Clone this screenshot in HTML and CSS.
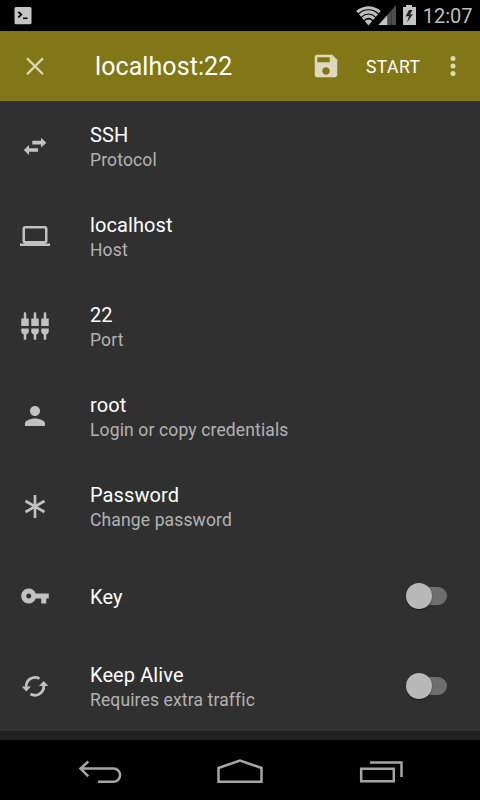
FILE: index.html
```html
<!DOCTYPE html>
<html lang="en">
<head>
<meta charset="utf-8">
<title>localhost:22</title>
<link rel="stylesheet" href="styles.css">
</head>
<body>
<div class="status">
  <svg class="term" width="18" height="18" viewBox="0 0 18 18"><rect x=".5" y="0" width="17" height="17.3" rx="1.5" fill="#c4c4c4"/><path d="M4.300 4.800 7.300 7.600 4.300 10.400" fill="none" stroke="#000" stroke-width="1.8"/><path d="M9 11.300h4.500" stroke="#000" stroke-width="1.6"/></svg>
  <svg class="signals" width="60" height="24" viewBox="355 4 60 24">
    <clipPath id="fan"><path d="M355 10.800Q367.500 1.500 380 10.800L367.500 25.500z"/></clipPath>
    <g clip-path="url(#fan)" fill="none" stroke="#bdbdbd" stroke-width="3.300">
      <circle cx="367.500" cy="23.500" r="16"/><circle cx="367.500" cy="23.500" r="11.600"/><circle cx="367.500" cy="23.500" r="7.300"/><circle cx="367.500" cy="23.500" r="2" stroke-width="4.200"/>
    </g>
    <path d="M395 5v20h-17.500z" fill="#4d4d4d"/><path d="M386.200 15.200V25h-8.700z" fill="#c4c4c4"/><path d="M390.500 10v15" stroke="#3a3a3a"/>
    <path d="M405 5h6v2h4v18h-13V7h3z" fill="#c4c4c4"/><path d="M408 10 404.500 16.500 408 16 406 22.500 412 14 408.800 14.500 411.500 10z" fill="#222"/>
  </svg>
  <span class="clock">12:07</span>
</div>
<header class="appbar">
  <svg class="close" width="30" height="30" viewBox="0 0 30 30"><path d="M7 7.300 23 23.300M23 7.300 7 23.300"/></svg>
  <h1>localhost:22</h1>
  <svg class="save" width="30" height="30" viewBox="0 0 24 24"><path d="M17 3H5a2 2 0 0 0-2 2v14a2 2 0 0 0 2 2h14c1.100 0 2-.9 2-2V7l-4-4zm-5 16c-1.660 0-3-1.340-3-3s1.340-3 3-3 3 1.340 3 3-1.340 3-3 3zm3-10H5V5h10v4z"/></svg>
  <button class="start">START</button>
  <svg class="more" width="30" height="30" viewBox="0 0 24 24"><circle cx="12" cy="6" r="2"/><circle cx="12" cy="12" r="2"/><circle cx="12" cy="18" r="2"/></svg>
</header>
<main>
  <div class="row">
    <svg class="icon" viewBox="0 0 30 30"><path d="M12.300 9.800H21V6.800l5.400 4.900L21 16.600v-3.200h-8.700zM18 17.200H9v-3.200l-5.200 5L9 24v-3.200h9z"/></svg>
    <div class="text"><div class="name">SSH</div><div class="sub">Protocol</div></div>
  </div>
  <div class="row">
    <svg class="icon" viewBox="0 0 24 24"><path d="M20 18c1.100 0 1.990-.9 1.990-2L22 6c0-1.100-.9-2-2-2H4c-1.100 0-2 .9-2 2v10c0 1.100.9 2 2 2H0v2h24v-2h-4zM4 6h16v10H4V6z"/></svg>
    <div class="text"><div class="name">localhost</div><div class="sub">Host</div></div>
  </div>
  <div class="row">
    <svg class="icon" viewBox="0 0 24 24"><path d="M5 2c0-.55-.45-1-1-1s-1 .45-1 1v4H1v6h6V6H5V2zm4 14c0 1.300.84 2.400 2 2.820V23h2v-4.180c1.160-.41 2-1.510 2-2.820v-2H9v2zm-8 0c0 1.300.84 2.400 2 2.820V23h2v-4.180C6.160 18.400 7 17.300 7 16v-2H1v2zM21 6V2c0-.55-.45-1-1-1s-1 .45-1 1v4h-2v6h6V6h-2zm-8-4c0-.55-.45-1-1-1s-1 .45-1 1v4H9v6h6V6h-2V2zm4 14c0 1.300.84 2.400 2 2.820V23h2v-4.180c1.160-.41 2-1.510 2-2.820v-2h-6v2z"/></svg>
    <div class="text"><div class="name">22</div><div class="sub">Port</div></div>
  </div>
  <div class="row">
    <svg class="icon" viewBox="0 0 24 24"><path d="M12 12c2.210 0 4-1.790 4-4s-1.790-4-4-4-4 1.790-4 4 1.790 4 4 4zm0 2c-2.670 0-8 1.340-8 4v2h16v-2c0-2.660-5.330-4-8-4z"/></svg>
    <div class="text"><div class="name">root</div><div class="sub">Login or copy credentials</div></div>
  </div>
  <div class="row">
    <svg class="icon" viewBox="0 0 30 30"><path class="line" d="M15 4v23M5.500 10l19 11M24.500 10l-19 11"/></svg>
    <div class="text"><div class="name">Password</div><div class="sub">Change password</div></div>
  </div>
  <div class="row">
    <svg class="icon" viewBox="0 0 24 24"><path d="M12.650 10C11.830 7.670 9.610 6 7 6c-3.310 0-6 2.690-6 6s2.690 6 6 6c2.610 0 4.830-1.670 5.650-4H17v4h4v-4h2v-4H12.650zM7 14c-1.100 0-2-.9-2-2s.9-2 2-2 2 .9 2 2-.9 2-2 2z"/></svg>
    <div class="text"><div class="name">Key</div></div>
    <div class="switch"></div>
  </div>
  <div class="row">
    <svg class="icon" viewBox="0 0 30 30"><path class="arc" d="M19.500 7.600A8.900 8.900 0 0 0 6.200 15.800M10.500 23A8.900 8.900 0 0 0 23.800 14.800"/><path d="M1.700 15.500h9.300L6.300 20.600zM19 15.100h9.300L23.700 10z"/></svg>
    <div class="text"><div class="name">Keep Alive</div><div class="sub">Requires extra traffic</div></div>
    <div class="switch"></div>
  </div>
</main>
<nav>
  <svg width="480" height="60" viewBox="0 740 480 60">
    <path d="M81 768.500h32.500a6.600 6.600 0 0 1 0 13.200H98M88.300 761.500 80.500 768.500l7.800 7.800"/>
    <path d="M218.500 781.700V768L240 760.500 261.500 768v13.700z"/>
    <path d="M361.200 768.700h32.600v12.600h-32.600zM370 762.500h31.500V777"/>
  </svg>
</nav>
</body>
</html>
```
FILE: styles.css
```css
* { box-sizing: border-box; }
body {
  margin: 0;
  width: 480px;
  height: 800px;
  overflow: hidden;
  display: flex;
  flex-direction: column;
  background: #212121;
  color: #fff;
  font-family: Roboto, "Liberation Sans", sans-serif;
}
svg { display: block; flex: none; }
.status {
  height: 31px;
  background: #000;
  display: flex;
  align-items: center;
  padding: 0 7.5px 0 14px;
}
.term { margin-top: 1px; }
.signals { margin-left: auto; margin-top: 1px; }
.clock {
  margin-left: 7px;
  font-size: 20px;
  line-height: 30px;
  color: #bebebe;
}
.appbar {
  height: 70px;
  background: #827717;
  display: flex;
  align-items: center;
  padding: 0 12.5px 0 20px;
}
.appbar svg { fill: #ddd9bd; }
.appbar .close { stroke: #ddd9bd; stroke-width: 2.3; }
h1 {
  margin: 2px 0 0 45px;
  font-size: 25px;
  font-weight: 400;
  line-height: 30px;
  letter-spacing: .08px;
}
.save { margin-left: auto; }
.start {
  margin: 2px 17px 0 25px;
  padding: 0;
  border: 0;
  background: none;
  color: #fff;
  font: 400 17.5px/24px Roboto, sans-serif;
  letter-spacing: .5px;
}
.row {
  height: 90px;
  display: flex;
  align-items: center;
  padding: 0 31.5px 0 20px;
  background: #303030;
}
.icon { width: 30px; height: 30px; fill: #c1c1c1; }
.line, .arc { fill: none; stroke: #c1c1c1; stroke-width: 2.7; }
.text { margin: 2px 0 0 40px; flex: 1; }
.name { font-size: 20px; line-height: 26px; letter-spacing: .1px; }
.sub {
  font-size: 17.5px;
  line-height: 24px;
  letter-spacing: .14px;
  color: #b3b3b3;
}
.switch {
  width: 43px;
  height: 26px;
  display: flex;
  align-items: center;
}
.switch::before {
  content: "";
  width: 26px;
  height: 26px;
  border-radius: 50%;
  background: #b9b9b9;
  box-shadow: 0 1px 1px rgba(0, 0, 0, .5);
  z-index: 1;
}
.switch::after {
  content: "";
  width: 28px;
  height: 18px;
  margin-left: -13px;
  border-radius: 9px;
  background: #6e6e6e;
}
nav { height: 60px; margin-top: auto; background: #000; }
nav path { fill: none; stroke: #a5a5a5; stroke-width: 2.5; }
```
